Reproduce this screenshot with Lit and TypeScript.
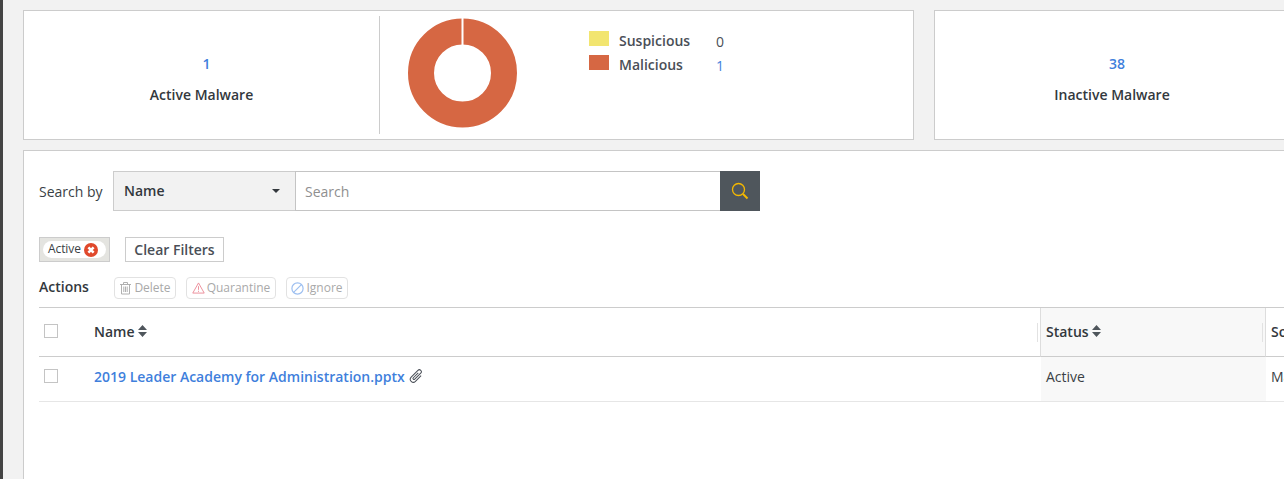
import { LitElement, html, css } from 'lit';
import { customElement } from 'lit/decorators.js';

const sortIcon = html`<svg class="sort" width="9" height="12" viewBox="0 0 9 12"><path d="M4.5 0 9 5H0zM4.5 12 0 7h9z" fill="#4f565c"/></svg>`;

@customElement('app-root')
export class AppRoot extends LitElement {
  static override styles = css`
    :host {
      display: block;
      font-family: 'Open Sans', 'Noto Sans', sans-serif;
      font-size: 14px;
      color: #3a3f45;
    }
    .page {
      display: flex;
      width: 1284px;
      height: 479px;
      overflow: hidden;
      background: #f2f2f2;
    }
    .rail {
      flex: none;
      width: 3px;
      background: #444;
    }
    .main {
      flex: none;
      width: 1261px;
      margin-left: 20px;
      padding-top: 10px;
      display: flex;
      flex-direction: column;
      gap: 10px;
    }
    .cards {
      display: flex;
      gap: 20px;
    }
    .card {
      flex: none;
      box-sizing: border-box;
      height: 130px;
      background: #fff;
      border: 1px solid #ccc;
      display: flex;
      align-items: center;
    }
    .card.wide {
      width: 891px;
    }
    .card.small {
      width: 356px;
    }
    .stat {
      flex: none;
      box-sizing: border-box;
      width: 356px;
      height: 118px;
      display: flex;
      flex-direction: column;
      align-items: center;
      padding-top: 38px;
      text-align: center;
    }
    .card.small .stat {
      width: 354px;
    }
    .card.wide .stat {
      border-right: 1px solid #ccc;
    }
    .num {
      line-height: 20px;
      color: #3f7fdc;
    }
    .stat .num {
      font-weight: 600;
      font-size: 14px;
      padding-left: 10px;
    }
    .stat .title {
      margin-top: 11px;
      line-height: 20px;
      font-weight: 600;
      color: #33383d;
    }
    .donut {
      flex: none;
      margin-left: 28px;
      margin-top: -4px;
      display: block;
    }
    .legend {
      margin-left: 71px;
      align-self: flex-start;
      margin-top: 19px;
      display: grid;
      grid-template-columns: 20px 107px 20px;
      grid-auto-rows: 24px;
      align-items: center;
    }
    .swatch {
      width: 20px;
      height: 15px;
      margin-top: -8px;
    }
    .legend .name {
      margin-left: 10px;
      font-weight: 600;
      color: #4a4f57;
      line-height: 20px;
      margin-top: -2px;
    }
    .legend .zero {
      color: #4a4f57;
      margin-top: -2px;
    }
    .panel {
      box-sizing: border-box;
      flex: none;
      height: 400px;
      background: #fff;
      border: 1px solid #ccc;
      border-right: 0;
      padding: 20px 0 0 15px;
    }
    .search {
      display: flex;
      align-items: center;
      height: 40px;
    }
    .search label {
      width: 74px;
      color: #3a3f45;
    }
    .select {
      box-sizing: border-box;
      width: 182px;
      height: 40px;
      background: #f2f2f2;
      border: 1px solid #ccc;
      border-right: 0;
      display: flex;
      align-items: center;
      justify-content: space-between;
      padding: 0 15px 2px 10px;
      font-weight: 600;
      color: #33383d;
    }
    .caret {
      width: 0;
      height: 0;
      margin-top: 2px;
      border-left: 4.5px solid transparent;
      border-right: 4.5px solid transparent;
      border-top: 4.5px solid #33383d;
    }
    .input {
      box-sizing: border-box;
      width: 425px;
      height: 40px;
      border: 1px solid #c4c4c4;
      border-right: 0;
      display: flex;
      align-items: center;
      padding-left: 9px;
      color: #8f8f8f;
    }
    .go {
      width: 40px;
      height: 40px;
      background: #4f565c;
      display: flex;
      align-items: center;
      justify-content: center;
    }
    .filters {
      display: flex;
      gap: 15px;
      margin-top: 26px;
      height: 25px;
    }
    .chipbox {
      box-sizing: border-box;
      width: 71px;
      height: 25px;
      background: #e4e4e0;
      border: 1px solid #ccc;
      padding: 3px;
    }
    .chip {
      height: 17px;
      background: #fff;
      border-radius: 9px;
      display: flex;
      align-items: center;
      padding-left: 5px;
      gap: 3px;
      font-size: 12px;
      letter-spacing: -0.1px;
      color: #3a3f45;
    }
    .chip span {
      margin-top: -2px;
    }
    .clear {
      box-sizing: border-box;
      width: 99px;
      height: 25px;
      background: #fff;
      border: 1px solid #ccc;
      display: flex;
      align-items: center;
      justify-content: center;
      font-weight: 600;
      color: #4a4f57;
    }
    .actions {
      display: flex;
      align-items: center;
      margin-top: 15px;
      height: 22px;
    }
    .actions strong {
      width: 75px;
      font-weight: 600;
      color: #33383d;
      margin-top: -4px;
    }
    .act {
      box-sizing: border-box;
      height: 22px;
      margin-right: 10px;
      padding-bottom: 2px;
      border: 1px solid #e2e2e2;
      border-radius: 4px;
      display: flex;
      align-items: center;
      justify-content: center;
      gap: 2px;
      font-size: 12px;
      color: #a9a9a9;
    }
    .act svg {
      margin-top: 2px;
    }
    .table {
      margin-top: 8px;
      width: 1300px;
      display: grid;
      grid-template-columns: 50px 952px 225px 73px;
      border-top: 1px solid #ccc;
    }
    .cell {
      box-sizing: border-box;
      padding-left: 5px;
      display: flex;
      align-items: center;
      white-space: nowrap;
      overflow: hidden;
    }
    .head {
      height: 49px;
      padding-bottom: 2px;
      border-bottom: 1px solid #ccc;
      font-weight: 600;
      color: #33383d;
      gap: 3px;
    }
    .row {
      height: 45px;
      padding-bottom: 6px;
      border-bottom: 1px solid #e6e6e6;
      color: #3a3f45;
    }
    .sorted {
      background: #f8f8f8;
    }
    .head.sorted {
      border-left: 1px solid #ddd;
      border-right: 1px solid #ddd;
      margin-left: -1px;
      padding-left: 5px;
    }
    .namecell {
      position: relative;
    }
    .grip {
      position: absolute;
      right: 3px;
      top: 15px;
      width: 1px;
      height: 19px;
      background: #e2e2e2;
    }
    .head.sorted .grip {
      right: 2px;
    }
    .box {
      box-sizing: border-box;
      width: 14px;
      height: 14px;
      border: 1px solid #c4c4c4;
      background: #fff;
    }
    .row.check {
      padding-bottom: 7px;
    }
    .link {
      color: #3f7fdc;
      font-weight: 600;
      margin-right: 4px;
    }
    .sort {
      display: block;
    }
  `;

  override render() {
    return html`
      <div class="page">
        <div class="rail"></div>
        <div class="main">
          <div class="cards">
            <div class="card wide">
              <div class="stat">
                <div class="num">1</div>
                <div class="title">Active Malware</div>
              </div>
              <svg class="donut" width="110" height="110" viewBox="0 0 110 110">
                <circle cx="54.5" cy="55" r="41.5" fill="none" stroke="#d66743" stroke-width="26" />
                <rect x="53.5" y="0" width="2" height="27" fill="#fff" />
              </svg>
              <div class="legend">
                <div class="swatch" style="background:#f2e570"></div>
                <div class="name">Suspicious</div>
                <div class="zero">0</div>
                <div class="swatch" style="background:#d66743"></div>
                <div class="name">Malicious</div>
                <div class="num">1</div>
              </div>
            </div>
            <div class="card small">
              <div class="stat">
                <div class="num">38</div>
                <div class="title">Inactive Malware</div>
              </div>
            </div>
          </div>

          <div class="panel">
            <div class="search">
              <label>Search by</label>
              <div class="select"><span>Name</span><span class="caret"></span></div>
              <div class="input">Search</div>
              <div class="go">
                <svg width="18" height="18" viewBox="0 0 18 18" fill="none" stroke="#f5b800">
                  <circle cx="7.5" cy="7.5" r="6" stroke-width="1.3" />
                  <path d="M12 12l4.5 4.5" stroke-width="2" />
                </svg>
              </div>
            </div>

            <div class="filters">
              <div class="chipbox">
                <div class="chip">
                  <span>Active</span>
                  <svg width="14" height="14" viewBox="0 0 14 14">
                    <circle cx="7" cy="7" r="7" fill="#e0492c" />
                    <path d="M4.4 4.4l5.2 5.2M9.6 4.4L4.4 9.6" stroke="#fff" stroke-width="2.6" />
                  </svg>
                </div>
              </div>
              <div class="clear">Clear Filters</div>
            </div>

            <div class="actions">
              <strong>Actions</strong>
              <div class="act" style="width:62px">
                <svg width="13" height="14" viewBox="0 0 13 14" fill="none" stroke="#b0b0b0">
                  <path d="M1 3.5h11M4.5 3.5V1.5h4v2M2.5 3.5v9.5h8V3.5M4.8 5.5v5.5M6.5 5.5v5.5M8.2 5.5v5.5" />
                </svg>
                Delete
              </div>
              <div class="act" style="width:90px">
                <svg width="13" height="12" viewBox="0 0 14 13" fill="none" stroke="#ec8a97">
                  <path d="M7 1 13.2 12H.8z" />
                  <path d="M7 4.5v4M7 9.5v1.2" />
                </svg>
                Quarantine
              </div>
              <div class="act" style="width:62px">
                <svg width="13" height="13" viewBox="0 0 13 13" fill="none" stroke="#9dbff0" stroke-width="1.2">
                  <circle cx="6.5" cy="6.5" r="5.6" />
                  <path d="M2.6 10.4l7.8-7.8" />
                </svg>
                Ignore
              </div>
            </div>

            <div class="table">
              <div class="cell head check"><div class="box"></div></div>
              <div class="cell head namecell">Name ${sortIcon}<span class="grip"></span></div>
              <div class="cell head sorted namecell">Status ${sortIcon}<span class="grip"></span></div>
              <div class="cell head">Source</div>

              <div class="cell row check"><div class="box"></div></div>
              <div class="cell row">
                <span class="link">2019 Leader Academy for Administration.pptx</span>
                <svg width="15" height="16" viewBox="0 0 15 16" fill="none" stroke="#4a4f57">
                  <path
                    transform="translate(7.5 8) rotate(45) translate(-3 -7.5)"
                    d="M6 4V12a3 3 0 0 1-6 0V2.5a2 2 0 0 1 4 0V11a1 1 0 0 1-2 0V4"
                  />
                </svg>
              </div>
              <div class="cell row sorted">Active</div>
              <div class="cell row">Manual</div>
            </div>
          </div>
        </div>
      </div>
    `;
  }
}
